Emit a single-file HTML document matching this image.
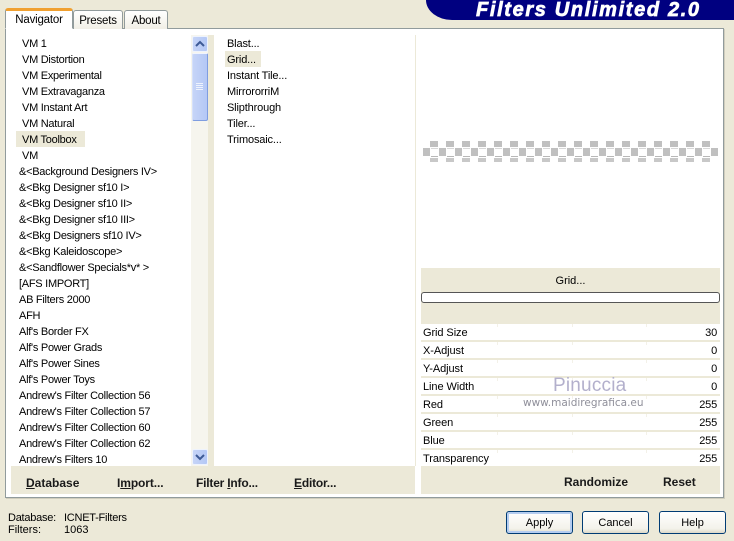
<!DOCTYPE html>
<html><head><meta charset="utf-8"><style>
html,body{margin:0;padding:0}
body{width:734px;height:541px;background:#ece9d8;position:relative;overflow:hidden;font:11px/16px "Liberation Sans",sans-serif;color:#000}
.a{position:absolute;white-space:nowrap}
.tab{position:absolute;box-sizing:border-box;border:1px solid #919b9c;border-bottom:0;border-radius:3px 3px 0 0;background:linear-gradient(#fff,#f1efe6);text-align:center;font-size:11.5px;letter-spacing:-.2px}
.it{position:absolute;height:16px;line-height:18px;white-space:nowrap;letter-spacing:-.27px}
.m{letter-spacing:-.15px}
.row{position:absolute;left:421px;width:299px;height:16px;background:#fff;line-height:18px;letter-spacing:-.08px}
.row b{font-weight:normal;position:absolute;left:2px}
.row i{font-style:normal;position:absolute;right:3px;letter-spacing:-.2px}
.row s{position:absolute;top:0;width:1px;height:3px;background:#f3f1e8}
.btxt{position:absolute;font-weight:bold;font-size:12px;white-space:nowrap;color:#1a1a1a;line-height:16px}
.btn{position:absolute;top:511px;height:23px;box-sizing:border-box;border:1px solid #003c74;border-radius:3px;background:linear-gradient(#fff,#f3f2ea 80%,#dcd8c8);text-align:center;line-height:23px}
.sb{position:absolute;left:192px;width:16px;box-sizing:border-box;border:1px solid #eef3fd;border-radius:2px;background:linear-gradient(90deg,#c6d4f7,#b4c8f6)}
</style></head><body>
<div class="a" style="left:426px;top:0;width:308px;height:20px;background:#000080;border-bottom-left-radius:26px 20px"></div>
<div class="a" style="left:476px;top:-2px;font:italic bold 20px/24px 'Liberation Sans',sans-serif;color:#fff;letter-spacing:1.65px;-webkit-text-stroke:.7px #fff">Filters Unlimited 2.0</div>

<div class="a" style="left:5px;top:28px;width:719px;height:470px;box-sizing:border-box;border:1px solid #919b9c;background:#fff;box-shadow:1px 1px 0 #d0cdbd"></div>
<div class="tab" style="left:73px;top:10px;width:50px;height:19px;line-height:20px">Presets</div>
<div class="tab" style="left:124px;top:10px;width:44px;height:19px;line-height:20px">About</div>
<div class="tab" style="left:5px;top:8px;width:68px;height:21px;background:#fff;border-bottom:1px solid #fff;line-height:18px;border-top:3px solid #f0a030">Navigator</div>

<div class="a" style="left:16px;top:131px;width:69px;height:16px;background:#ece9d8"></div>
<div class="a" style="left:225px;top:51px;width:36px;height:16px;background:#ece9d8"></div>

<div class="it" style="left:22px;top:35px">VM 1</div>
<div class="it" style="left:22px;top:51px">VM Distortion</div>
<div class="it" style="left:22px;top:67px">VM Experimental</div>
<div class="it" style="left:22px;top:83px">VM Extravaganza</div>
<div class="it" style="left:22px;top:99px">VM Instant Art</div>
<div class="it" style="left:22px;top:115px">VM Natural</div>
<div class="it" style="left:22px;top:131px">VM Toolbox</div>
<div class="it" style="left:22px;top:147px">VM</div>
<div class="it" style="left:19px;top:163px">&amp;&lt;Background Designers IV&gt;</div>
<div class="it" style="left:19px;top:179px">&amp;&lt;Bkg Designer sf10 I&gt;</div>
<div class="it" style="left:19px;top:195px">&amp;&lt;Bkg Designer sf10 II&gt;</div>
<div class="it" style="left:19px;top:211px">&amp;&lt;Bkg Designer sf10 III&gt;</div>
<div class="it" style="left:19px;top:227px">&amp;&lt;Bkg Designers sf10 IV&gt;</div>
<div class="it" style="left:19px;top:243px">&amp;&lt;Bkg Kaleidoscope&gt;</div>
<div class="it" style="left:19px;top:259px">&amp;&lt;Sandflower Specials*v* &gt;</div>
<div class="it" style="left:19px;top:275px">[AFS IMPORT]</div>
<div class="it" style="left:19px;top:291px">AB Filters 2000</div>
<div class="it" style="left:19px;top:307px">AFH</div>
<div class="it" style="left:19px;top:323px">Alf's Border FX</div>
<div class="it" style="left:19px;top:339px">Alf's Power Grads</div>
<div class="it" style="left:19px;top:355px">Alf's Power Sines</div>
<div class="it" style="left:19px;top:371px">Alf's Power Toys</div>
<div class="it" style="left:19px;top:387px">Andrew's Filter Collection 56</div>
<div class="it" style="left:19px;top:403px">Andrew's Filter Collection 57</div>
<div class="it" style="left:19px;top:419px">Andrew's Filter Collection 60</div>
<div class="it" style="left:19px;top:435px">Andrew's Filter Collection 62</div>
<div class="it" style="left:19px;top:451px">Andrew's Filters 10</div>

<div class="a" style="left:191px;top:35px;width:17px;height:431px;background:#f6f5ee"></div>
<div class="a" style="left:208px;top:35px;width:6px;height:431px;background:#ece9d8"></div>
<div class="sb" style="top:36px;height:16px"></div>
<svg class="a" style="left:192px;top:36px" width="16" height="16"><path d="M4 10L8 6L12 10" fill="none" stroke="#3d5a96" stroke-width="2"/></svg>
<div class="sb" style="top:53px;height:68px;border-color:#f0f4fe #7f9de0 #7f9de0 #d5e0fb"></div>
<svg class="a" style="left:196px;top:82px" width="8" height="8"><path d="M0 1.5H7M0 3.5H7M0 5.5H7M0 7.5H7" stroke="#eef3fd"/></svg>
<div class="sb" style="top:449px;height:16px"></div>
<svg class="a" style="left:192px;top:449px" width="16" height="16"><path d="M4 6L8 10L12 6" fill="none" stroke="#3d5a96" stroke-width="2"/></svg>

<div class="it m" style="left:227px;top:35px">Blast...</div>
<div class="it m" style="left:227px;top:51px">Grid...</div>
<div class="it m" style="left:227px;top:67px">Instant Tile...</div>
<div class="it m" style="left:227px;top:83px">MirrororriM</div>
<div class="it m" style="left:227px;top:99px">Slipthrough</div>
<div class="it m" style="left:227px;top:115px">Tiler...</div>
<div class="it m" style="left:227px;top:131px">Trimosaic...</div>

<div class="a" style="left:415px;top:35px;width:1px;height:431px;background:#ece9d8"></div>

<svg class="a" style="left:423px;top:141px" width="295" height="21">
<defs><pattern id="c" width="16" height="21" patternUnits="userSpaceOnUse">
<rect x="7" y="0" width="8" height="6" fill="#c0c0c0"/>
<rect x="0" y="7" width="7" height="8" fill="#c0c0c0"/>
<rect x="8" y="7" width="7" height="1" fill="#d8d8d8"/>
<rect x="8" y="15" width="7" height="1" fill="#b8b8b8"/>
<rect x="7" y="17" width="8" height="4" fill="#c8c8c8"/>
</pattern></defs>
<rect width="295" height="21" fill="url(#c)"/></svg>

<div class="a" style="left:421px;top:268px;width:299px;height:198px;background:#ece9d8"></div>
<div class="a" style="left:421px;top:273px;width:299px;text-align:center">Grid...</div>
<div class="a" style="left:421px;top:292px;width:299px;height:11px;box-sizing:border-box;border:1px solid #555;border-radius:3px;background:#fff"></div>

<div class="row" style="top:324px"><s style="left:76px"></s><s style="left:151px"></s><s style="left:225px"></s><b>Grid Size</b><i>30</i></div>
<div class="row" style="top:342px"><s style="left:76px"></s><s style="left:151px"></s><s style="left:225px"></s><b>X-Adjust</b><i>0</i></div>
<div class="row" style="top:360px"><s style="left:76px"></s><s style="left:151px"></s><s style="left:225px"></s><b>Y-Adjust</b><i>0</i></div>
<div class="row" style="top:378px"><s style="left:76px"></s><s style="left:151px"></s><s style="left:225px"></s><b>Line Width</b><i>0</i></div>
<div class="row" style="top:396px"><s style="left:76px"></s><s style="left:151px"></s><s style="left:225px"></s><b>Red</b><i>255</i></div>
<div class="row" style="top:414px"><s style="left:76px"></s><s style="left:151px"></s><s style="left:225px"></s><b>Green</b><i>255</i></div>
<div class="row" style="top:432px"><s style="left:76px"></s><s style="left:151px"></s><s style="left:225px"></s><b>Blue</b><i>255</i></div>
<div class="row" style="top:450px"><s style="left:76px"></s><s style="left:151px"></s><s style="left:225px"></s><b>Transparency</b><i>255</i></div>

<div class="a" style="left:553px;top:375px;font:19px/22px 'Liberation Sans',sans-serif;color:#b3b0cc;letter-spacing:.2px">Pinuccia</div>
<div class="a" style="left:523px;top:396px;font:10.5px/14px 'DejaVu Sans',sans-serif;color:#8f8f9a;letter-spacing:0">www.maidiregrafica.eu</div>

<div class="a" style="left:11px;top:466px;width:404px;height:28px;background:#ece9d8"></div>
<div class="a" style="left:421px;top:466px;width:299px;height:28px;background:#ece9d8"></div>
<div class="btxt" style="left:26px;top:475px"><u>D</u>atabase</div>
<div class="btxt" style="left:117px;top:475px;letter-spacing:-.1px">I<u>m</u>port...</div>
<div class="btxt" style="left:196px;top:475px;letter-spacing:-.2px">Filter <u>I</u>nfo...</div>
<div class="btxt" style="left:294px;top:475px;letter-spacing:-.2px"><u>E</u>ditor...</div>
<div class="btxt" style="left:564px;top:474px">Randomize</div>
<div class="btxt" style="left:663px;top:474px">Reset</div>

<div class="a" style="left:8px;top:510px;letter-spacing:-.25px">Database:</div>
<div class="a" style="left:64px;top:510px;letter-spacing:-.25px">ICNET-Filters</div>
<div class="a" style="left:8px;top:522px">Filters:</div>
<div class="a" style="left:64px;top:522px">1063</div>

<div class="btn" style="left:506px;width:67px;box-shadow:inset 0 0 0 2px #b5cdf0">Apply</div>
<div class="btn" style="left:582px;width:67px">Cancel</div>
<div class="btn" style="left:659px;width:67px">Help</div>
</body></html>
